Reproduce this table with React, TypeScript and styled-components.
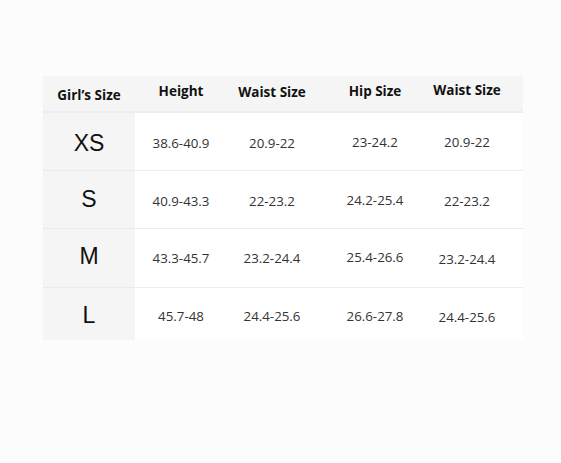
import React from 'react';
import styled, { createGlobalStyle } from 'styled-components';

type Row = {
  size: string;
  values: string[];
  dy?: number[];
};

const headers = ['Height', 'Waist Size', 'Hip Size', 'Waist Size'];
const headerShift = [-3, -2, -3, -4];
// nudges so text sits where the chart image puts it
const colShift = [0, -1, 5, -5];

const rows: Row[] = [
  { size: 'XS', values: ['38.6-40.9', '20.9-22', '23-24.2', '20.9-22'], dy: [1, 1, 0, 0] },
  { size: 'S', values: ['40.9-43.3', '22-23.2', '24.2-25.4', '22-23.2'], dy: [1, 1, 0, 1] },
  { size: 'M', values: ['43.3-45.7', '23.2-24.4', '25.4-26.6', '23.2-24.4'], dy: [0, 0, -1, 1] },
  { size: 'L', values: ['45.7-48', '24.4-25.6', '26.6-27.8', '24.4-25.6'], dy: [2, 2, 2, 3] },
];

const rowHeights = [58, 58, 59, 52];
const sizeShift = [2, 0, -2, 1];

const GlobalStyle = createGlobalStyle`
  html, body {
    margin: 0;
    padding: 0;
    background: #fcfcfc;
  }
  body {
    font-family: 'Open Sans', 'Noto Sans', sans-serif;
  }
`;

const Page = styled.div`
  width: 561px;
  height: 463px;
  padding: 76px 0 0 43px;
  box-sizing: border-box;
  background: #fcfcfc;
`;

const Table = styled.div`
  display: grid;
  grid-template-columns: 92px 92px 92px 102px 102px;
  width: 480px;
`;

const HeadCell = styled.div<{ $dy?: number; $dx?: number }>`
  height: 35px;
  background: #f5f5f5;
  border-bottom: 2px solid #ededed;
  display: flex;
  align-items: center;
  justify-content: center;
  font-family: 'Open Sans', 'Noto Sans', sans-serif;
  font-weight: 700;
  font-size: 13.5px;
  color: #111;
  white-space: nowrap;
  span {
    transform: translate(${(p) => p.$dx ?? 0}px, ${(p) => p.$dy ?? 0}px);
  }
`;

const SizeCell = styled.div<{ $h: number; $last?: boolean; $dy?: number }>`
  height: ${(p) => p.$h}px;
  background: #f5f5f5;
  border-bottom: ${(p) => (p.$last ? 'none' : '1px solid #ebebeb')};
  box-sizing: border-box;
  display: flex;
  align-items: center;
  justify-content: center;
  font-family: 'Liberation Sans', Arial, sans-serif;
  font-size: 23px;
  color: #111;
  span {
    transform: translateY(${(p) => p.$dy ?? 0}px);
  }
`;

const DataCell = styled.div<{ $h: number; $last?: boolean; $dy?: number; $dx?: number }>`
  height: ${(p) => p.$h}px;
  background: #fff;
  border-bottom: ${(p) => (p.$last ? 'none' : '1px solid #ececec')};
  box-sizing: border-box;
  display: flex;
  align-items: center;
  justify-content: center;
  font-family: 'Open Sans', 'Noto Sans', sans-serif;
  font-size: 13.3px;
  color: #333;
  white-space: nowrap;
  span {
    transform: translate(${(p) => p.$dx ?? 0}px, ${(p) => p.$dy ?? 0}px);
  }
`;

export default function App() {
  return (
    <>
      <GlobalStyle />
      <Page>
        <Table>
          <HeadCell $dy={1}>
            <span>Girl’s Size</span>
          </HeadCell>
          {headers.map((h, i) => (
            <HeadCell key={i} $dy={headerShift[i]} $dx={colShift[i]}>
              <span>{h}</span>
            </HeadCell>
          ))}
          {rows.map((row, r) => {
            const last = r === rows.length - 1;
            return (
              <React.Fragment key={row.size}>
                <SizeCell $h={rowHeights[r]} $last={last} $dy={sizeShift[r]}>
                  <span>{row.size}</span>
                </SizeCell>
                {row.values.map((v, c) => (
                  <DataCell
                    key={c}
                    $h={rowHeights[r]}
                    $last={last}
                    $dy={row.dy?.[c]}
                    $dx={colShift[c]}
                  >
                    <span>{v}</span>
                  </DataCell>
                ))}
              </React.Fragment>
            );
          })}
        </Table>
      </Page>
    </>
  );
}
